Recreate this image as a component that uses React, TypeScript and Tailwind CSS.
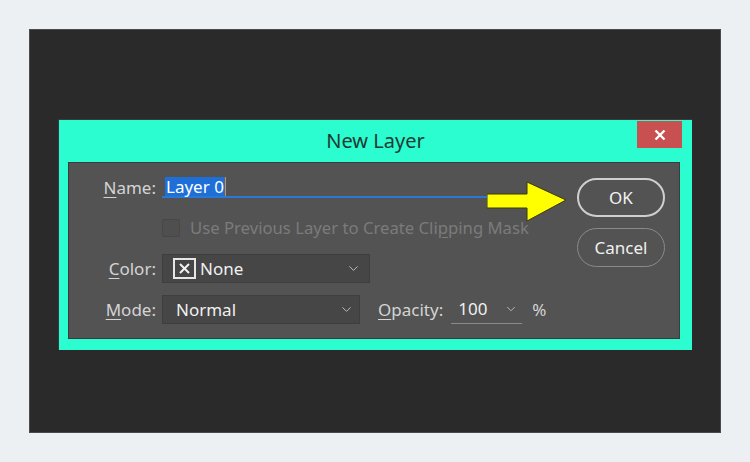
import { ChevronDown } from "lucide-react";

const font = { fontFamily: '"Noto Sans", "Open Sans", sans-serif' };

const Label = ({ u, rest }: { u: string; rest: string }) => (
  <div className="w-[87px] shrink-0 text-right text-[17px] text-[#d4d4d4]">
    <span className="underline underline-offset-[3px] decoration-1">{u}</span>
    {rest}
  </div>
);

export default function App() {
  return (
    <div className="w-[750px] h-[462px] bg-[#ecf0f3] p-[29px]" style={font}>
      <div className="w-full h-full bg-[#2a2a2a] border border-[#4a4a4a] pl-[28px] pt-[89px]">
        <div className="relative w-[634px] h-[231px] bg-[#2bfdd0] border-l border-t border-[#3a3a3a]">
          <div className="h-[42px] flex items-center justify-center text-[20px] text-[#1d3a33]">
            New Layer
          </div>
          <button className="absolute right-[10px] top-[1px] w-[45px] h-[27px] bg-[#c85050] flex items-center justify-center">
            <svg width="12" height="12" viewBox="0 0 12 12">
              <path d="M1.5 1.5 L10.5 10.5 M10.5 1.5 L1.5 10.5" stroke="white" strokeWidth="2.4" />
            </svg>
          </button>

          <div className="relative ml-[9px] w-[612px] h-[177px] bg-[#535353] border border-[#3c3c3c] flex">
            <div className="flex-1 flex flex-col pt-[14px]">
              <div className="h-[21px] flex items-center">
                <Label u="N" rest="ame:" />
                <div className="ml-[6px] w-[340px] h-full border-b-2 border-[#2a78d6] flex items-center pl-[3px]">
                  <span className="bg-[#1e6fd8] text-white text-[17px] leading-[19px] px-[1px]">Layer 0</span>
                  <span className="w-[1px] h-[19px] bg-[#e08a2a]" />
                </div>
              </div>

              <div className="mt-[20px] h-[19px] flex items-center">
                <div className="ml-[93px] w-[18px] h-[18px] rounded-[2px] border border-[#474747] bg-[#4f4f4f]" />
                <span className="ml-[10px] text-[16.7px] text-[#7b7b7b]">
                  Use Previous Layer to Create Cli<span className="underline underline-offset-[3px]">p</span>ping Mask
                </span>
              </div>

              <div className="mt-[17px] h-[29px] flex items-center">
                <Label u="C" rest="olor:" />
                <div className="ml-[6px] w-[208px] h-full bg-[#464646] border border-[#3e3e3e] flex items-center pl-[10px] pr-[8px]">
                  <div className="w-[23px] h-[21px] border-2 border-[#e6e6e6] flex items-center justify-center">
                    <svg width="11" height="11" viewBox="0 0 11 11">
                      <path d="M1 1 L10 10 M10 1 L1 10" stroke="#f2f2f2" strokeWidth="2" />
                    </svg>
                  </div>
                  <span className="ml-[4px] text-[17px] text-[#f0f0f0]">None</span>
                  <ChevronDown className="ml-auto text-[#bdbdbd]" size={15} strokeWidth={1.6} />
                </div>
              </div>

              <div className="mt-[12px] h-[29px] flex items-center">
                <Label u="M" rest="ode:" />
                <div className="ml-[6px] w-[198px] h-full bg-[#464646] border border-[#3e3e3e] flex items-center pl-[13px] pr-[5px]">
                  <span className="text-[17px] text-[#f0f0f0]">Normal</span>
                  <ChevronDown className="ml-auto text-[#bdbdbd]" size={15} strokeWidth={1.6} />
                </div>
                <span className="ml-[18px] text-[17px] text-[#d4d4d4]">
                  <span className="underline underline-offset-[3px]">O</span>pacity:
                </span>
                <div className="ml-[8px] w-[71px] h-full border-b border-[#8a8a8a] flex items-center pl-[7px] pr-[4px]">
                  <span className="text-[17px] text-[#f0f0f0]">100</span>
                  <ChevronDown className="ml-auto text-[#bdbdbd]" size={14} strokeWidth={1.6} />
                </div>
                <span className="ml-[10px] text-[17px] text-[#d4d4d4]">%</span>
              </div>
            </div>

            <div className="w-[88px] mr-[14px] pt-[15px] flex flex-col gap-[11px]">
              <button className="h-[39px] rounded-full border-2 border-[#cfcfcf] text-[17px] text-[#f2f2f2]">OK</button>
              <button className="h-[39px] rounded-full border border-[#8a8a8a] text-[17px] text-[#f0f0f0]">Cancel</button>
            </div>

            <svg className="absolute left-[418px] top-[18px]" width="82" height="44" viewBox="0 0 82 44">
              <polygon
                points="0,13 40,13 40,1 79,19 40,40 40,27 0,27"
                fill="#ffff00"
                stroke="#3a3a10"
                strokeWidth="1"
                strokeLinejoin="round"
              />
            </svg>
          </div>
        </div>
      </div>
    </div>
  );
}
